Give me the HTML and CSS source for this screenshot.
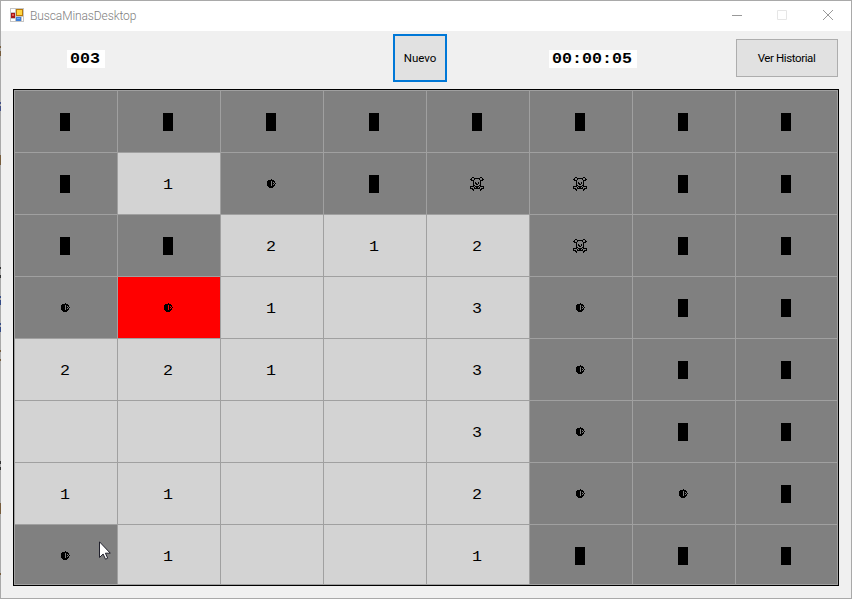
FILE: index.html
```
<!DOCTYPE html>
<html lang="es">
<head>
<meta charset="utf-8">
<title>BuscaMinasDesktop</title>
<link rel="stylesheet" href="styles.css">
</head>
<body>
<svg class="defs" width="0" height="0">
  <symbol id="mine" viewBox="0 0 9 9"><path fill="#000" d="M4 0h1v1H4zM1 1h6v1H1zM0 2h4v5H0zM5 2h1v5H5zM6 2h2v1H6zM7 3h1v1H7zM6 4h1v1H6zM8 4h1v1H8zM7 5h1v1H7zM6 6h2v1H6zM1 7h6v1H1zM2 8h4v1H2z"/></symbol>
  <symbol id="skull" viewBox="0 0 14 14"><path fill="none" stroke="#000" d="M2 .5h2M10 .5h2M1 1.500h1M4 1.500h6M12 1.500h1M0 2.500h2M4 2.500h1M9 2.500h1M12 2.500h2M1 3.500h3M10 3.500h3M3 4.500h1M10 4.500h1M3 5.500h1M5 5.500h1M8 5.500h1M10 5.500h1M3 6.500h1M5 6.500h2M8 6.500h1M10 6.500h1M3 7.500h1M6 7.500h2M10 7.500h1M3 8.500h2M9 8.500h2M0 9.500h4M5 9.500h4M10 9.500h4M0 10.500h1M4 10.500h1M6 10.500h2M9 10.500h1M13 10.500h1M0 11.500h3M4 11.500h6M11 11.500h3M2 12.500h2M10 12.500h2M3 13.500h1M10 13.500h1"/></symbol>
</svg>
<div class="window">
  <header class="titlebar">
    <svg class="app" width="14" height="14"><path fill="#c5c5c5" d="M0 0h14v14H0z"/><path fill="#fff" d="M1 1h4v3H1zM1 11h4v2H1zM12 9h1v4h-1z"/><path fill="#a51818" d="M1 5h4v5H1z"/><path fill="#e75a50" d="M2 6h2v2H2z"/><path fill="#b97908" d="M6 1h7v7H6z"/><path fill="#ffd541" d="M7 2h5v5H7z"/><path fill="#3d7ed8" d="M6 9h5v4H6z"/><path fill="#70aaf5" d="M7 10h3v1H7z"/></svg>
    <span class="title">BuscaMinasDesktop</span>
    <svg class="controls" width="103" height="12" fill="none" stroke="#999"><path d="M0 5.500h10"/><path stroke="#e6e6e6" d="M45.500 .5h9v9h-9z"/><path d="M91 0l10 10M101 0l-10 10"/></svg>
  </header>
  <div class="toolbar">
    <span class="counter mines"><span class="digits">003</span></span>
    <button class="new">Nuevo</button>
    <span class="counter clock"><span class="digits">00:00:05</span></span>
    <button class="history">Ver Historial</button>
  </div>
  <main class="board" id="board"></main>
</div>
<div class="edge"></div>
<svg class="cursor" width="12" height="19"><path fill="#fff" stroke="#20202c" d="M.5 .8v15.700l3.600-3.500 2.400 5.200 2.200-1-2.300-5h4.900z"/></svg>
<script src="board.js"></script>
</body>
</html>
```
FILE: styles.css
```
* { box-sizing: border-box; }
body { margin: 0; background: #fff; font-family: Roboto, sans-serif; }
.defs { position: absolute; }
.window { width: 852px; height: 599px; border: 1px solid #a9a9a9; background: #f0f0f0; }
.titlebar { height: 30px; background: #fff; display: flex; align-items: flex-start; padding-left: 9px; }
.app { margin-top: 7px; }
.title { margin: 7px 0 0 6px; font-size: 12px; font-weight: 300; line-height: 16px; color: #808080; letter-spacing: -.1px; }
.controls { margin: 9px 16px 0 auto; }
.toolbar { height: 58px; display: flex; align-items: flex-start; }
.counter { background: #fff; height: 18px; margin-top: 19px; font: bold 16.670px/17px "Liberation Mono", monospace; padding-left: 3px; color: #000; }
.digits { display: block; transform: scaleY(.9); }
.mines { width: 38px; margin-left: 66px; }
.clock { width: 88px; margin-left: 102px; }
button { font: 11.500px Roboto, sans-serif; color: #000; padding: 0; background: #e1e1e1; border: 1px solid #adadad; border-radius: 0; }
.new { width: 54px; height: 48px; margin: 3px 0 0 288px; border: 2px solid #0078d7; }
.history { width: 102px; height: 38px; margin: 8px 0 0 99px; padding-right: 1px; letter-spacing: -.4px; }
.board { width: 826px; height: 497px; margin-left: 12px; border: 1px solid #000; display: grid; grid-template-columns: repeat(8, 103px); grid-template-rows: repeat(7, 62px) 61px; overflow: hidden; }
.cell { border: solid #a0a0a0; border-width: 1px 0 0 1px; background: #808080; display: flex; align-items: flex-start; font: 16.670px/18px "Liberation Mono", monospace; }
.cell:nth-child(8n) { border-right-width: 1px; }
.cell:nth-child(n+57) { border-bottom-width: 1px; }
.open { background: #d3d3d3; }
.hit { background: #f00; }
.block { width: 10px; height: 18px; background: #000; margin: 22px 0 0 45px; }
.num { margin: 23px 0 0 45px; transform: scaleY(.9); }
.mine { width: 9px; height: 9px; margin: 26px 0 0 46px; }
.skull { width: 14px; height: 14px; margin: 24px 0 0 43px; }
.cursor { position: absolute; left: 99px; top: 541px; }
.edge { position: absolute; left: 0; top: 0; width: 1px; height: 600px; background: linear-gradient(transparent 46px, #765c3c 46px 48px, transparent 48px 51px, #765c3c 51px 56px, transparent 56px 102px, #424f85 102px 104px, transparent 104px 106px, #424f85 106px 111px, transparent 111px 155px, #765c3c 155px 165px, transparent 165px 267px, #333 267px 269px, transparent 269px 275px, #333 275px 278px, transparent 278px 296px, #344b86 296px 298px, transparent 298px 300px, #344b86 300px 305px, transparent 305px 323px, #344b86 323px 325px, transparent 325px 327px, #344b86 327px 332px, transparent 332px 350px, #765c3c 350px 352px, transparent 352px 359px, #765c3c 359px 361px, transparent 361px 461px, #333 461px 464px, transparent 464px 467px, #333 467px 470px, transparent 470px 503px, #765c3c 503px 514px, transparent 514px 573px, #765c3c 573px 575px, transparent 575px); }
```
FILE: board.js
```
const rows = [
  "########",
  "#1*#XX##",
  "##212X##",
  "*!1 3*##",
  "221 3*##",
  "    3*##",
  "11  2**#",
  "*1  1###"
];
const board = document.getElementById("board");
for (const c of rows.join("")) {
  const cell = document.createElement("div");
  cell.className = "cell";
  if (/[ 0-9]/.test(c)) cell.classList.add("open");
  if (c === "!") cell.classList.add("hit");
  if (c === "#") cell.innerHTML = '<i class="block"></i>';
  else if (c === "*" || c === "!") cell.innerHTML = '<svg class="mine"><use href="#mine"/></svg>';
  else if (c === "X") cell.innerHTML = '<svg class="skull"><use href="#skull"/></svg>';
  else if (c !== " ") cell.innerHTML = '<span class="num">' + c + '</span>';
  board.append(cell);
}
```
